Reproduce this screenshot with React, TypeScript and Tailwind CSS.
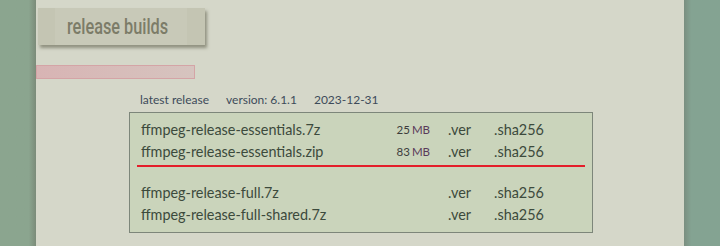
import React from 'react';

const files = [
  { name: 'ffmpeg-release-essentials.7z', size: '25', group: 1 },
  { name: 'ffmpeg-release-essentials.zip', size: '83', group: 1 },
  { name: 'ffmpeg-release-full.7z', size: '', group: 2 },
  { name: 'ffmpeg-release-full-shared.7z', size: '', group: 2 },
];

function FileRow({ name, size }: { name: string; size: string }) {
  return (
    <div className="flex h-[22px] items-center text-[14.4px] text-[#3c4a3c]">
      <span className="w-[253px]">{name}</span>
      <span className="w-[36px] text-right text-[11.5px] text-[#3c3c3c]">
        {size && (
          <>
            {size}
            <span className="ml-[2px] text-[#5a3a5a]">MB</span>
          </>
        )}
      </span>
      <span className="ml-[18px] w-[46px]">.ver</span>
      <span>.sha256</span>
    </div>
  );
}

export default function App() {
  return (
    <div
      className="flex h-[246px] w-[720px] overflow-hidden bg-[#84a392]"
      style={{ fontFamily: 'Lato, "Open Sans", sans-serif' }}
    >
      <div className="w-[36px] shrink-0 bg-gradient-to-r from-[#8ba58f] from-80% to-[#7b8b79]" />
      <div className="relative w-[648px] shrink-0 bg-[#d5d7c9]">
        <div className="ml-[2px] mt-[8px] flex h-[37px] w-[167px] items-center bg-[#c4c5b3] shadow-[2px_3px_3px_rgba(90,90,70,0.55)]">
          <div className="ml-[17px] flex h-full w-[132px] items-center overflow-hidden bg-[#c8c9b8] pl-[12px]">
            <span
              className="inline-block origin-left scale-x-[0.74] whitespace-nowrap text-[22px] font-medium leading-none text-[#7c7c68]"
              style={{ fontFamily: 'Roboto, "DejaVu Sans", sans-serif' }}
            >
              release builds
            </span>
          </div>
        </div>
        <div className="mt-[20px] h-[14px] w-[159px] border border-[#d4a4a6] bg-gradient-to-r from-[#d8b4b4] to-[#d6c4bf]" />
        <div className="ml-[104px] mt-[13px] flex h-[16px] items-center gap-[17px] text-[12px] text-[#3d4b5a]">
          <span>latest release</span>
          <span>version: 6.1.1</span>
          <span>2023-12-31</span>
        </div>
        <div className="ml-[93px] mt-[4px] w-[464px] border border-[#7d867a] bg-[#cad4bb] pb-[6px] pl-[11px] pt-[6px]">
          {files.filter((f) => f.group === 1).map((f) => (
            <FileRow key={f.name} name={f.name} size={f.size} />
          ))}
          <div className="-ml-[4px] mr-[7px] mt-[2px] h-[2px] bg-[#e41e2a]" />
          <div className="mt-[15px]">
            {files.filter((f) => f.group === 2).map((f) => (
              <FileRow key={f.name} name={f.name} size={f.size} />
            ))}
          </div>
        </div>
      </div>
      <div className="w-[36px] shrink-0 bg-gradient-to-r from-[#7a8e80] to-[#84a392] to-20%" />
    </div>
  );
}
